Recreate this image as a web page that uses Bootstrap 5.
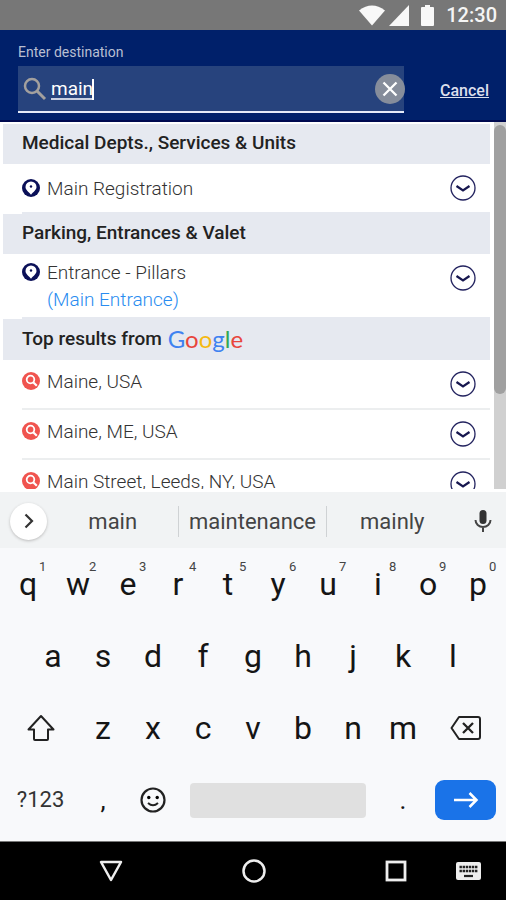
<!DOCTYPE html>
<html lang="en">
<head>
<meta charset="utf-8">
<meta name="viewport" content="width=device-width, initial-scale=1">
<title>Enter destination</title>
<link href="https://cdn.jsdelivr.net/npm/bootstrap@5.3.0/dist/css/bootstrap.min.css" rel="stylesheet">
<style>
body{font-family:Roboto,"Liberation Sans",sans-serif;background:#fff;color:#222}
button{background:none;border:0;padding:0;color:inherit}
svg{display:block;flex:none}
.status-bar{background:#777;height:30px;color:#f5f5f5;font-size:20px;font-weight:500;line-height:28px;padding-right:9px}
.search-head{background:#00206a;border-bottom:2px solid #000a50;color:#fff;height:92px;padding:12px 17px 9px 18px}
.search-head label{font-size:14px;line-height:20px;color:#b9bfd2}
.search-box{background:#27437d;border-bottom:2px solid #e4eaf8;height:47px;margin-top:4px;padding-left:5px}
.search-input{background:none;border:0;outline:0;color:#fff;font-size:19px;line-height:26px;padding:0;text-decoration:underline;text-decoration-thickness:2px;text-underline-offset:3px;text-decoration-color:#c9d0e2}
.caret-line{left:41px;top:3px;width:2px;height:21px;background:#fff}
.clear-btn{width:30px;height:30px;background:#868d9b;margin-right:-1px}
.cancel-link{color:#dcdfec;font-size:16px;font-weight:500;margin-left:36px;margin-top:6px}
.results{flex:1 1 0;min-height:0;padding-top:2px;margin-bottom:3px}
.results-list{padding-left:3px;margin-right:4px}
.group-title{background:#e6e9f0;font-size:19px;font-weight:500;line-height:38px;height:40px;padding-left:19px;margin:0;color:#222}
.group-title.tall{height:41px;line-height:40px}
.result-row{margin-left:19px;padding:11px 14px 0 0;height:50px;border-bottom:2px solid #eceeef;font-size:19px;line-height:27px;color:#333;font-weight:300}
.result-row.last-row{border-color:#e6e9f0}
.result-row.two-line{height:65px;padding-top:5px}
.result-row.web{padding-top:8px}
.result-row.web .more-btn{margin-top:3px}
.result-row.two-line .more-btn{margin-top:6px}
.result-row .pin{margin:4px 7px 0 0}
.alias{color:#2a8cf0}
.scroll-track{width:12px;background:#d0d0d0;margin-top:-2px;padding-top:3px}
.scroll-thumb{height:74%;background:#a0a0a0;border-radius:6px}
.brand-word{font-family:Lato,sans-serif;font-size:24px;font-weight:400;margin-left:6px}
.g-blue{color:#3f82f0}.g-red{color:#e8453c}.g-yellow{color:#f5b912}.g-green{color:#34a853}
.suggest-bar{background:#f1f3f4;height:56px;font-size:22px;color:#444;padding:2px 14px 0 10px}
.expand-btn{width:37px;height:37px;background:#fff;box-shadow:0 1px 3px #bbb}
.suggest-bar .word{flex:9 1 0;height:31px;line-height:31px}
.suggest-bar .word.middle{flex-grow:10;border:solid #cfd2d4;border-width:0 1px}
.mic-btn{width:34px}
.keyboard{background:#f8f9fb;color:#151515;padding:0 3px 5px}
.key-row{height:72px}
.key-row.inset{padding:0 25px}
.key{flex:2 1 0;font-size:32px;line-height:36px;position:relative}
.key sup{position:absolute;left:50%;margin-left:11px;top:-7px;font-size:13px;line-height:16px;color:#444}
.key.wide{flex-grow:3}
.key.mode{font-size:22px;color:#333}
.key.punct{font-size:26px}
.space-slot{flex:8 1 0}
.space-key{width:88%;height:35px;background:#e0e0e0;border-radius:4px}
.go-key{width:61px;height:40px;background:#1a73e8;border-radius:9px}
.nav-area{background:#000;border-top:1px solid #777;height:59px;padding-left:76px}
.nav-area button{width:70px}
.nav-area .ime-btn{width:75px}
</style>
<script src="https://cdn.jsdelivr.net/npm/bootstrap@5.3.0/dist/js/bootstrap.bundle.min.js"></script>
</head>
<body class="d-flex flex-column vh-100 overflow-hidden">
<svg width="0" height="0" class="position-absolute" aria-hidden="true">
<symbol id="pin" viewBox="0 0 18 18"><circle cx="9" cy="9" r="9" fill="#0b1058"/><path d="M9 2.500a5.500 5.500 0 0 0-5.500 5.500c0 2.800 2.800 4.700 5.500 7.700 2.700-3 5.500-4.900 5.500-7.700a5.500 5.500 0 0 0-5.500-5.500z" fill="#fff"/><circle cx="9" cy="7.500" r="1.200" fill="#0b1058"/></symbol>
<symbol id="find" viewBox="0 0 18 18"><circle cx="9" cy="9" r="9" fill="#f0544f"/><circle cx="8.500" cy="7.500" r="3.800" fill="none" stroke="#fff" stroke-width="1.800"/><path d="M11.200 10.200l3.600 3.600" stroke="#fff" stroke-width="2.200"/></symbol>
<symbol id="more" viewBox="0 0 26 26"><circle cx="13" cy="13" r="12" fill="none" stroke="#23235f" stroke-width="1.300"/><path d="M6.500 11l6.500 4.500 6.500-4.500" fill="none" stroke="#17174f" stroke-width="2.200"/></symbol>
</svg>

<div class="status-bar d-flex flex-shrink-0 align-items-center justify-content-end">
<svg width="26" height="21" viewBox="0 0 26 21"><path d="M0 5.500Q13-4.500 26 5.500L13 20.500z" fill="#f8f8f8"/></svg>
<svg class="ms-1" width="20" height="21" viewBox="0 0 20 21"><path d="M20 0v21H0z" fill="#f8f8f8"/></svg>
<svg class="mx-2 ps-1" width="17" height="21" viewBox="0 0 13 21"><path d="M4 0h5v2h3q1 0 1 1v17q0 1-1 1H1q-1 0-1-1V3q0-1 1-1h3z" fill="#f8f8f8"/></svg>
<span class="ms-1">12:30</span>
</div>

<header class="search-head flex-shrink-0">
<label class="d-block" for="dest">Enter destination</label>
<div class="d-flex align-items-center">
<div class="search-box d-flex align-items-center flex-grow-1">
<svg width="24" height="24" viewBox="0 0 24 24" fill="none" stroke="#a3a09e"><circle cx="9" cy="9" r="7" stroke-width="2.500"/><path d="M14 14l8 8" stroke-width="3"/></svg>
<div class="position-relative flex-grow-1 ms-1"><input class="search-input w-100" id="dest" type="text" value="main"><span class="caret-line position-absolute"></span></div>
<button class="clear-btn rounded-circle d-flex align-items-center justify-content-center" type="button" aria-label="Clear"><svg width="16" height="16" viewBox="0 0 16 16"><path d="M1.500 1.500l13 13m0-13l-13 13" stroke="#fff" stroke-width="2.300"/></svg></button>
</div>
<a class="cancel-link" href="#">Cancel</a>
</div>
</header>

<main class="results d-flex overflow-hidden">
<div class="results-list flex-grow-1">
<h2 class="group-title">Medical Depts., Services &amp; Units</h2>
<div class="result-row last-row d-flex"><svg class="pin" width="18" height="18"><use href="#pin"/></svg><div class="flex-grow-1">Main Registration</div><button class="more-btn align-self-start" type="button" aria-label="Expand"><svg width="26" height="26"><use href="#more"/></svg></button></div>
<h2 class="group-title">Parking, Entrances &amp; Valet</h2>
<div class="result-row last-row two-line d-flex"><svg class="pin" width="18" height="18"><use href="#pin"/></svg><div class="flex-grow-1">Entrance - Pillars<br><span class="alias">(Main Entrance)</span></div><button class="more-btn align-self-start" type="button" aria-label="Expand"><svg width="26" height="26"><use href="#more"/></svg></button></div>
<h2 class="group-title tall d-flex">Top results from <span class="brand-word"><span class="g-blue">G</span><span class="g-red">o</span><span class="g-yellow">o</span><span class="g-blue">g</span><span class="g-green">l</span><span class="g-red">e</span></span></h2>
<div class="result-row web d-flex"><svg class="pin" width="18" height="18"><use href="#find"/></svg><div class="flex-grow-1">Maine, USA</div><button class="more-btn align-self-start" type="button" aria-label="Expand"><svg width="26" height="26"><use href="#more"/></svg></button></div>
<div class="result-row web d-flex"><svg class="pin" width="18" height="18"><use href="#find"/></svg><div class="flex-grow-1">Maine, ME, USA</div><button class="more-btn align-self-start" type="button" aria-label="Expand"><svg width="26" height="26"><use href="#more"/></svg></button></div>
<div class="result-row web d-flex"><svg class="pin" width="18" height="18"><use href="#find"/></svg><div class="flex-grow-1">Main Street, Leeds, NY, USA</div><button class="more-btn align-self-start" type="button" aria-label="Expand"><svg width="26" height="26"><use href="#more"/></svg></button></div>
</div>
<div class="scroll-track"><div class="scroll-thumb"></div></div>
</main>

<div class="suggest-bar d-flex align-items-center flex-shrink-0">
<button class="expand-btn rounded-circle d-flex align-items-center justify-content-center" type="button" aria-label="More tools"><svg width="10" height="16" viewBox="0 0 10 16"><path d="M1.500 1.500L8 8l-6.500 6.500" fill="none" stroke="#333" stroke-width="2.200"/></svg></button>
<div class="d-flex flex-grow-1 text-center"><button class="word" type="button">main</button><button class="word middle" type="button">maintenance</button><button class="word" type="button">mainly</button></div>
<button class="mic-btn d-flex justify-content-center ps-3" type="button" aria-label="Voice input"><svg width="18" height="22" viewBox="0 0 18 22"><rect x="5.500" y="0" width="7" height="14" rx="3.500" fill="#333"/><path d="M1.500 10a7.500 7 0 0 0 15 0M9 17v5" fill="none" stroke="#444" stroke-width="2"/></svg></button>
</div>

<div class="keyboard flex-shrink-0">
<div class="key-row d-flex align-items-center"><button class="key">q<sup>1</sup></button><button class="key">w<sup>2</sup></button><button class="key">e<sup>3</sup></button><button class="key">r<sup>4</sup></button><button class="key">t<sup>5</sup></button><button class="key">y<sup>6</sup></button><button class="key">u<sup>7</sup></button><button class="key">i<sup>8</sup></button><button class="key">o<sup>9</sup></button><button class="key">p<sup>0</sup></button></div>
<div class="key-row inset d-flex align-items-center"><button class="key">a</button><button class="key">s</button><button class="key">d</button><button class="key">f</button><button class="key">g</button><button class="key">h</button><button class="key">j</button><button class="key">k</button><button class="key">l</button></div>
<div class="key-row d-flex align-items-center"><button class="key wide d-flex justify-content-center" aria-label="Shift"><svg width="28" height="28" viewBox="0 0 28 28"><path d="M14 2L1.500 15.500H7V25q0 1 1 1h12q1 0 1-1v-9.500h5.500z" fill="none" stroke="#222" stroke-width="2" stroke-linejoin="round"/></svg></button><button class="key">z</button><button class="key">x</button><button class="key">c</button><button class="key">v</button><button class="key">b</button><button class="key">n</button><button class="key">m</button><button class="key wide d-flex justify-content-center" aria-label="Backspace"><svg width="32" height="26" viewBox="0 0 32 26" fill="none" stroke="#222" stroke-width="2"><path d="M9 2h19q2 0 2 2v18q0 2-2 2H9L1.500 13z" stroke-linejoin="round"/><path d="M13 8l10 10m0-10L13 18" stroke-width="2.300"/></svg></button></div>
<div class="key-row d-flex align-items-center"><button class="key wide mode">?123</button><button class="key punct">,</button><button class="key d-flex justify-content-center" aria-label="Emoji"><svg width="26" height="26" viewBox="0 0 26 26"><circle cx="13" cy="13" r="11.500" fill="none" stroke="#222" stroke-width="2.200"/><circle cx="8.800" cy="10.500" r="1.700"/><circle cx="17.200" cy="10.500" r="1.700"/><path d="M8 16q5 4.500 10 0" fill="none" stroke="#222" stroke-width="2"/></svg></button><div class="space-slot d-flex justify-content-center"><button class="space-key" aria-label="Space"></button></div><button class="key punct">.</button><div class="key wide d-flex justify-content-center"><button class="go-key d-flex align-items-center justify-content-center" aria-label="Go"><svg width="26" height="18" viewBox="0 0 26 18" fill="none" stroke="#fff" stroke-width="2.500"><path d="M1 9h22M16.500 2l7 7-7 7"/></svg></button></div></div>
</div>

<nav class="nav-area d-flex flex-shrink-0">
<div class="d-flex flex-grow-1 justify-content-between">
<button class="d-flex align-items-center justify-content-center" aria-label="Back"><svg width="24" height="22" viewBox="0 0 24 22"><path d="M2 2h20L12 20z" fill="none" stroke="#eee" stroke-width="2.500" stroke-linejoin="round"/></svg></button>
<button class="d-flex align-items-center justify-content-center" aria-label="Home"><svg width="24" height="24" viewBox="0 0 24 24"><circle cx="12" cy="12" r="10.500" fill="none" stroke="#eee" stroke-width="2.500"/></svg></button>
<button class="d-flex align-items-center justify-content-center" aria-label="Recent apps"><svg width="22" height="22" viewBox="0 0 22 22"><rect x="2" y="2" width="18" height="18" fill="none" stroke="#eee" stroke-width="2.800"/></svg></button>
</div>
<button class="ime-btn d-flex align-items-center justify-content-center" aria-label="Switch keyboard"><svg width="25" height="18" viewBox="0 0 25 18"><rect width="25" height="18" rx="2" fill="#eee"/><path d="M3.500 5h18M3.500 9h18" stroke="#222" stroke-width="2.400" stroke-dasharray="2.400 .7"/><path d="M8 14h9" stroke="#222" stroke-width="2.200"/></svg></button>
</nav>
</body>
</html>
